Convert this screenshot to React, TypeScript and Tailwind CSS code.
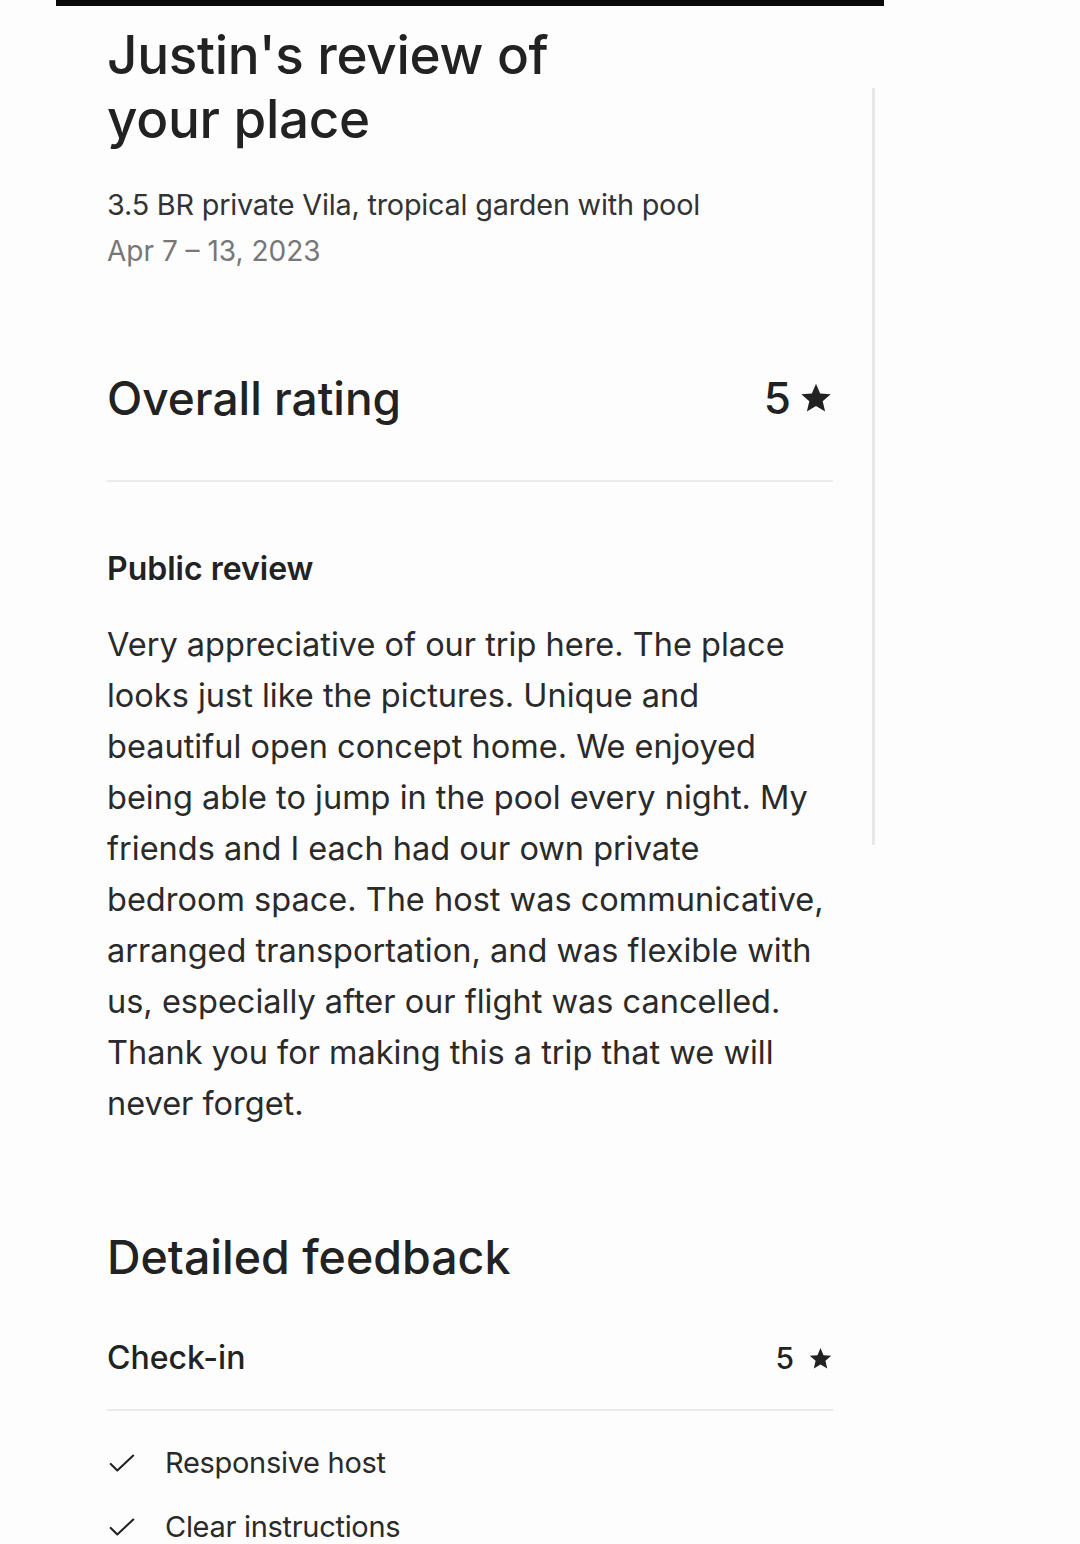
import React from 'react';

const Star = ({ size }: { size: number }) => (
  <svg width={size} height={size} viewBox="0 0 32 32" fill="#222222" aria-hidden>
    <path d="M16 2.5l3.9 9.2 9.9.8-7.5 6.5 2.3 9.7L16 23.6l-8.6 5.1 2.3-9.7-7.5-6.5 9.9-.8z" />
  </svg>
);

const Check = () => (
  <svg width={30} height={30} viewBox="0 0 32 32" fill="none" stroke="#222222" strokeWidth={2.2} strokeLinecap="round" strokeLinejoin="round" aria-hidden>
    <path d="M4 17l7 7L28 8" />
  </svg>
);

const reviewLines = [
  'Very appreciative of our trip here. The place',
  'looks just like the pictures. Unique and',
  'beautiful open concept home. We enjoyed',
  'being able to jump in the pool every night. My',
  'friends and I each had our own private',
  'bedroom space. The host was communicative,',
  'arranged transportation, and was flexible with',
  'us, especially after our flight was cancelled.',
  'Thank you for making this a trip that we will',
  'never forget.',
];

export default function App() {
  return (
    <div className="w-[1080px] h-[1544px] overflow-hidden bg-[#fdfdfd] text-[#222222]" style={{ fontFamily: 'Inter, "Open Sans", sans-serif' }}>
      <div className="ml-[56px] w-[828px] h-[6px] bg-[#0a0a0a]" />
      <div className="flex">
        <div className="ml-[107px] w-[726px] flex flex-col">
          <h1 className="mt-[17px] text-[53px] leading-[64px] font-medium tracking-[-0.3px]">
            Justin's review of
            <br />
            your place
          </h1>
          <div className="mt-[31px] text-[28.8px] leading-[46px] text-[#333333] tracking-[-0.2px]">3.5 BR private Vila, tropical garden with pool</div>
          <div className="text-[28px] leading-[46px] text-[#777777]">Apr 7 – 13, 2023</div>

          <div className="mt-[96px] flex items-center justify-between h-[56px]">
            <span className="text-[46px] font-medium">Overall rating</span>
            <span className="flex items-center gap-[8px] text-[44px] font-medium">
              5 <Star size={34} />
            </span>
          </div>
          <div className="mt-[54px] h-[2px] bg-[#ebebeb]" />

          <div className="mt-[67px] text-[32px] leading-[40px] font-semibold">Public review</div>
          <div className="mt-[30px] text-[32.5px] leading-[51px] text-[#2a2a2a] whitespace-nowrap">
            {reviewLines.map(l => (
              <div key={l}>{l}</div>
            ))}
          </div>

          <div className="mt-[100px] text-[46.5px] leading-[56px] font-medium">Detailed feedback</div>

          <div className="mt-[53px] flex items-center justify-between h-[40px]">
            <span className="text-[32px] font-medium">Check-in</span>
            <span className="flex items-center gap-[14px] text-[30px] font-medium">
              5 <Star size={25} />
            </span>
          </div>
          <div className="mt-[31px] h-[2px] bg-[#ebebeb]" />

          <div className="mt-[32px] flex flex-col gap-[24px]">
            {['Responsive host', 'Clear instructions'].map(t => (
              <div key={t} className="flex items-center gap-[28px] h-[40px] text-[29px] text-[#2a2a2a] tracking-[-0.3px]">
                <Check />
                <span>{t}</span>
              </div>
            ))}
          </div>
        </div>
        <div className="ml-[39px] mt-[82px] w-[3px] h-[757px] bg-[#e8e8e8]" />
      </div>
    </div>
  );
}
